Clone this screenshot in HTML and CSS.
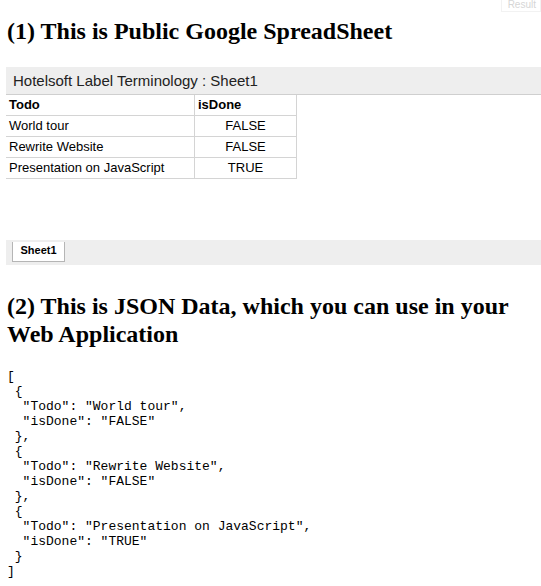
FILE: index.html
```html
<!DOCTYPE html>
<html>
<head>
<meta charset="utf-8">
<link rel="stylesheet" href="styles.css">
</head>
<body>
<div class="result-label">Result</div>
<h2 class="title first">(1) This is Public Google SpreadSheet</h2>
<div class="sheet">
  <div class="sheet-header">Hotelsoft Label Terminology : Sheet1</div>
  <table class="grid">
    <tr><th class="c1">Todo</th><th class="c2">isDone</th></tr>
    <tr><td class="c1">World tour</td><td class="c2 val">FALSE</td></tr>
    <tr><td class="c1">Rewrite Website</td><td class="c2 val">FALSE</td></tr>
    <tr><td class="c1">Presentation on JavaScript</td><td class="c2 val">TRUE</td></tr>
  </table>
  <div class="tabbar"><span class="tab">Sheet1</span></div>
</div>
<h2 class="title second">(2) This is JSON Data, which you can use in your Web Application</h2>
<pre class="json">[
 {
  "Todo": "World tour",
  "isDone": "FALSE"
 },
 {
  "Todo": "Rewrite Website",
  "isDone": "FALSE"
 },
 {
  "Todo": "Presentation on JavaScript",
  "isDone": "TRUE"
 }
]</pre>
</body>
</html>
```
FILE: styles.css
```css
html, body {
  margin: 0;
  padding: 0;
  background: #fff;
}
body {
  padding: 0 0 0 6px;
  font-family: "Liberation Serif", serif;
  color: #000;
  position: relative;
}
.result-label {
  position: absolute;
  right: 0;
  top: -1px;
  font-family: "Liberation Sans", sans-serif;
  font-size: 10px;
  line-height: 11px;
  color: #d6d6d6;
  border: 1px solid #f2f2f2;
  border-top: none;
  padding: 0 4px 1px 6px;
  background: #fff;
}
.title {
  font-family: "Liberation Serif", serif;
  font-weight: bold;
  font-size: 24px;
  line-height: 28px;
  margin: 0;
  padding-left: 1px;
}
.title.first {
  padding-top: 17px;
}
.sheet {
  margin-top: 22px;
  font-family: "Liberation Sans", Arial, sans-serif;
}
.sheet-header {
  background: #eeeeee;
  border-bottom: 1px solid #cfcfcf;
  height: 27px;
  line-height: 28px;
  font-size: 15px;
  color: #222;
  padding-left: 7px;
}
.grid {
  border-collapse: collapse;
  font-size: 13px;
  color: #000;
}
.grid th, .grid td {
  height: 20px;
  padding: 0 3px;
  border-bottom: 1px solid #d4d4d4;
  border-right: 1px solid #d4d4d4;
  text-align: left;
  line-height: 20px;
}
.grid th {
  font-weight: bold;
}
.grid .c1 {
  width: 182px;
}
.grid .c2 {
  width: 95px;
}
.grid td.val {
  text-align: center;
}
.tabbar {
  margin-top: 61px;
  background: #eeeeee;
  height: 25px;
}
.tab {
  display: inline-block;
  margin-left: 6px;
  background: #fff;
  border: 1px solid #b5b5b5;
  border-top: none;
  height: 19px;
  width: 51px;
  text-align: center;
  line-height: 17px;
  font-size: 11px;
  font-weight: bold;
  color: #000;
}
.title.second {
  margin-top: 27px;
  padding-right: 20px;
}
.json {
  margin: 21px 0 0 1px;
  font-family: "Liberation Mono", "Courier New", monospace;
  font-size: 13px;
  line-height: 15px;
  color: #000;
}
```
